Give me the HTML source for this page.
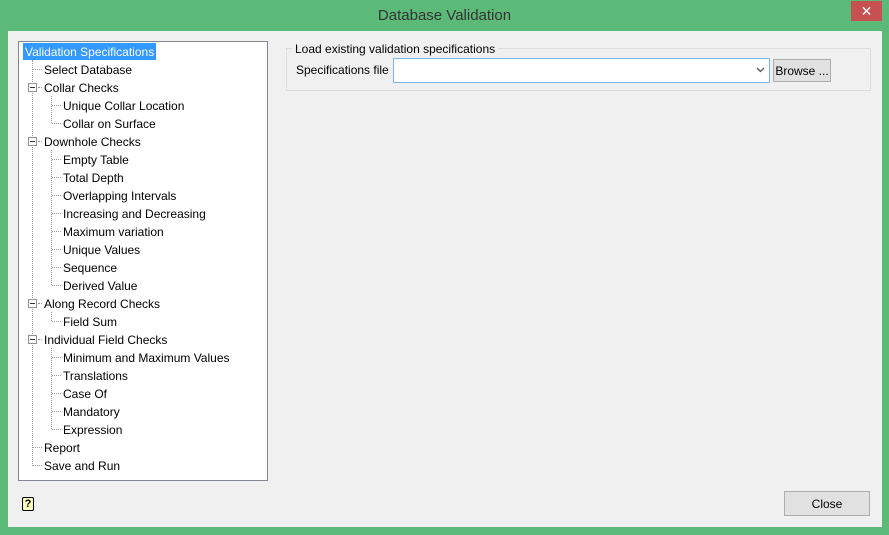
<!DOCTYPE html>
<html><head><style>
*{margin:0;padding:0;box-sizing:border-box}
body{width:889px;height:535px;background:#5cba79;position:relative;overflow:hidden;font-family:"Liberation Sans",sans-serif;font-size:12px;color:#000}
.abs{position:absolute}
#client{left:8px;top:31px;width:874px;height:496px;background:#f0f0f0}
#title{left:0;top:7px;width:889px;text-align:center;font-size:15px;color:#333}
#x{left:851px;top:1px;width:31px;height:20px;background:#c75050;color:#fff;text-align:center;font-size:14px;line-height:20px}
#tree{left:18px;top:41px;width:250px;height:440px;background:#fff;border:1px solid #828790}
.t{position:absolute;white-space:nowrap;line-height:16px;height:16px}
.vl{position:absolute;border-left:1px dotted #999;width:0}
.hl{position:absolute;border-top:1px dotted #999;height:0}
.ex{position:absolute;width:9px;height:9px;border:1px solid #919191;background:#fff}
.ex:after{content:"";position:absolute;left:1px;top:3px;width:5px;height:1px;background:#333}
</style></head><body>
<div class="abs" id="title">Database Validation</div>
<div class="abs" id="x">✕</div>
<div class="abs" id="client"></div>
<div class="abs" id="tree"></div>
<div class="abs" style="left:23px;top:43px;width:133px;height:17px;background:#3399ff"></div>
<div id="treeitems"></div>
<script>
var items=[[0,"Validation Specifications"],[1,"Select Database"],[1,"Collar Checks",1],[2,"Unique Collar Location"],[2,"Collar on Surface"],[1,"Downhole Checks",1],[2,"Empty Table"],[2,"Total Depth"],[2,"Overlapping Intervals"],[2,"Increasing and Decreasing"],[2,"Maximum variation"],[2,"Unique Values"],[2,"Sequence"],[2,"Derived Value"],[1,"Along Record Checks",1],[2,"Field Sum"],[1,"Individual Field Checks",1],[2,"Minimum and Maximum Values"],[2,"Translations"],[2,"Case Of"],[2,"Mandatory"],[2,"Expression"],[1,"Report"],[1,"Save and Run"]];
var h="";var lastParent=-1;
h+='<div class="vl" style="left:32px;top:60px;height:406px"></div>';
items.forEach(function(it,i){var cy=51+i*18;var lv=it[0];var ty=cy-7;
 if(lv==0){h+='<div class="t" style="left:25px;top:'+ty+'px;color:#fff">'+it[1]+'</div>';return;}
 if(lv==1){
  if(it[2]){h+='<div class="ex" style="left:28px;top:'+(cy-4)+'px"></div><div class="hl" style="left:38px;top:'+cy+'px;width:4px"></div>';lastParent=i;}
  else h+='<div class="hl" style="left:33px;top:'+cy+'px;width:9px"></div>';
  h+='<div class="t" style="left:44px;top:'+ty+'px">'+it[1]+'</div>';
 } else {
  h+='<div class="hl" style="left:52px;top:'+cy+'px;width:9px"></div><div class="t" style="left:63px;top:'+ty+'px">'+it[1]+'</div>';
  var nxt=items[i+1];if(!nxt||nxt[0]!=2){var py=51+lastParent*18;h+='<div class="vl" style="left:51px;top:'+(py+9)+'px;height:'+(cy-py-9)+'px"></div>';}
 }
});
document.getElementById("treeitems").innerHTML=h;
</script>
<div class="abs" style="left:286px;top:48px;width:585px;height:43px;border:1px solid #dcdcdc"></div>
<div class="abs" style="left:292px;top:42px;background:#f0f0f0;padding:0 3px;line-height:14px">Load existing validation specifications</div>
<div class="abs" style="left:296px;top:63px">Specifications file</div>
<div class="abs" style="left:393px;top:58px;width:377px;height:25px;background:#fff;border:1px solid #7eb4ea"></div>
<svg class="abs" style="left:756px;top:67px" width="9" height="6"><path d="M1 1 L4.5 4.5 L8 1" stroke="#555" stroke-width="1.3" fill="none"/></svg>
<div class="abs" style="left:773px;top:59px;width:58px;height:23px;background:#e1e1e1;border:1px solid #adadad;text-align:center;line-height:22px">Browse ...</div>
<div class="abs" style="left:784px;top:491px;width:86px;height:25px;background:#e1e1e1;border:1px solid #adadad;text-align:center;line-height:24px">Close</div>
<div class="abs" style="left:22px;top:497px;width:12px;height:14px;background:#ffffc0;border:1px solid #000;border-radius:2px;font-size:11px;font-weight:bold;text-align:center;line-height:12px">?</div>
</body></html>
